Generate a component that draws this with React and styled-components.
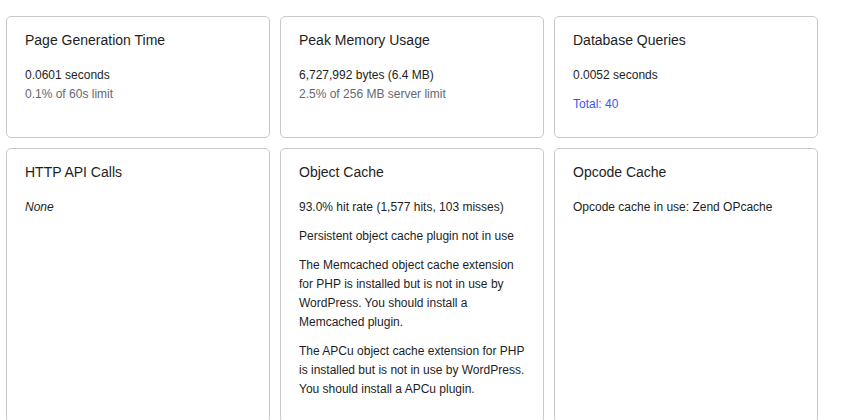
import React from "react";
import styled, { createGlobalStyle } from "styled-components";

const GlobalStyle = createGlobalStyle`
  html, body {
    margin: 0;
    padding: 0;
    background: #fff;
  }
  body {
    font-family: "Liberation Sans", Arial, sans-serif;
    color: #1e1e1e;
  }
`;

const Grid = styled.section`
  display: grid;
  grid-template-columns: repeat(3, 264px);
  gap: 10px;
  padding: 16px 6px;
`;

const Card = styled.div`
  border: 1px solid #c8c8c8;
  border-radius: 5px;
  padding: 15px 18px 13px;
`;

const Title = styled.h3`
  margin: 0 0 17px;
  font-size: 14px;
  font-weight: 400;
  line-height: 1.2;
  color: #1e1e1e;
`;

const Text = styled.p`
  margin: 0 0 10px;
  font-size: 12px;
  line-height: 19px;
  color: ${(p) => (p.link ? "#3858e9" : "#1e1e1e")};
  font-style: ${(p) => (p.italic ? "italic" : "normal")};
`;

const Sub = styled.span`
  display: block;
  color: #646970;
`;

const cards = [
  {
    title: "Page Generation Time",
    body: (
      <Text>
        0.0601 seconds
        <Sub>0.1% of 60s limit</Sub>
      </Text>
    ),
  },
  {
    title: "Peak Memory Usage",
    body: (
      <Text>
        6,727,992 bytes (6.4 MB)
        <Sub>2.5% of 256 MB server limit</Sub>
      </Text>
    ),
  },
  {
    title: "Database Queries",
    body: (
      <>
        <Text>0.0052 seconds</Text>
        <Text link>Total: 40</Text>
      </>
    ),
  },
  {
    title: "HTTP API Calls",
    body: <Text italic>None</Text>,
  },
  {
    title: "Object Cache",
    body: (
      <>
        <Text>93.0% hit rate (1,577 hits, 103 misses)</Text>
        <Text>Persistent object cache plugin not in use</Text>
        <Text>
          The Memcached object cache extension for PHP is installed but is not
          in use by WordPress. You should install a Memcached plugin.
        </Text>
        <Text>
          The APCu object cache extension for PHP is installed but is not in
          use by WordPress. You should install a APCu plugin.
        </Text>
      </>
    ),
  },
  {
    title: "Opcode Cache",
    body: <Text>Opcode cache in use: Zend OPcache</Text>,
  },
];

export default function App() {
  return (
    <>
      <GlobalStyle />
      <Grid>
        {cards.map((c) => (
          <Card key={c.title}>
            <Title>{c.title}</Title>
            {c.body}
          </Card>
        ))}
      </Grid>
    </>
  );
}
